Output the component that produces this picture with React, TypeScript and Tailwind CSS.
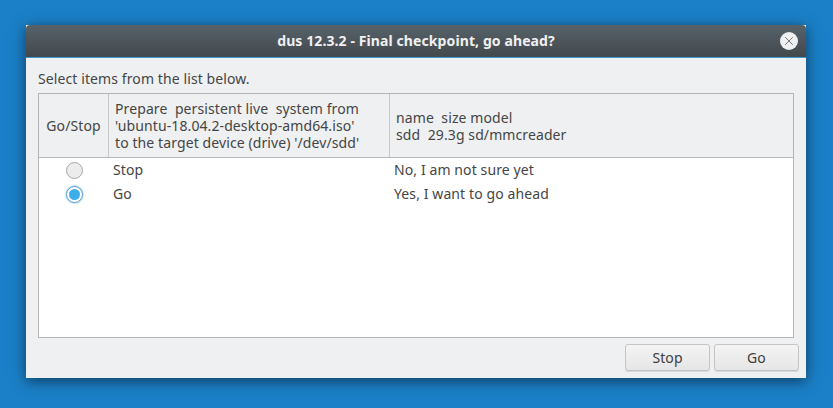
import { X } from "lucide-react";

function Radio({ checked }: { checked?: boolean }) {
  if (checked) {
    return (
      <span className="flex h-[17px] w-[17px] items-center justify-center rounded-full border border-[#5a9fd0] bg-white shadow-[0_0_0_1px_#c4e3f8]">
        <span className="h-[11px] w-[11px] rounded-full bg-[#3daee9]" />
      </span>
    );
  }
  return <span className="h-[17px] w-[17px] rounded-full border border-[#a8a8a8] bg-[#ececec]" />;
}

function Row({ label, desc, checked }: { label: string; desc: string; checked?: boolean }) {
  return (
    <div className="flex h-6 items-center">
      <div className="flex w-[70px] justify-center">
        <Radio checked={checked} />
      </div>
      <div className="w-[281px] pb-[2px] pl-[4px]">{label}</div>
      <div className="pb-[2px] pl-[4px]">{desc}</div>
    </div>
  );
}

function DialogButton({ label }: { label: string }) {
  return (
    <button className="h-[27px] w-[85px] rounded-[3px] border border-[#c4c4c4] bg-gradient-to-b from-[#f4f4f4] to-[#e6e6e6] text-[#3d3d3d] shadow-[0_1px_0_#d8d8d8]">
      {label}
    </button>
  );
}

export default function App() {
  return (
    <div className="flex h-[408px] w-[833px] items-start bg-[#1b80c8] pl-[26px] pt-[25px] font-['Noto_Sans','Open_Sans',sans-serif] text-[14px] tracking-[0.1px] text-[#454545]">
      <div className="flex h-[353px] w-[780px] flex-col bg-[#eff0f1] shadow-[0_3px_14px_rgba(0,0,0,0.55)]">
        <div className="relative flex h-[33px] items-center justify-center rounded-t-[4px] border-b border-[#3d9ad6] bg-gradient-to-b from-[#56626a] to-[#43494d] pb-[2px] font-bold text-[#f0f0f0]">
          dus 12.3.2 - Final checkpoint, go ahead?
          <span className="absolute right-[8px] top-[7px] flex h-[18px] w-[18px] items-center justify-center rounded-full bg-[#eef0f2]">
            <X size={14} strokeWidth={1.2} className="text-[#444]" />
          </span>
        </div>

        <div className="flex flex-1 flex-col pl-3 pr-[7px]">
          <div className="flex h-[35px] items-end pb-[4px] leading-5">Select items from the list below.</div>

          <div className="mr-[5px] flex h-[245px] flex-col border border-[#b4b4b4] bg-white">
            <div className="flex h-[64px] border-b border-[#b9b9b9] bg-[#eff0f1] leading-[17px]">
              <div className="flex w-[70px] items-center justify-center border-r border-[#c8c8c8]">Go/Stop</div>
              <div className="flex w-[281px] flex-col justify-center whitespace-pre border-r border-[#c8c8c8] pl-[6px]">
                <span>Prepare  persistent live  system from</span>
                <span>'ubuntu-18.04.2-desktop-amd64.iso'</span>
                <span>to the target device (drive) '/dev/sdd'</span>
              </div>
              <div className="flex flex-col justify-center whitespace-pre pl-[6px]">
                <span>name  size model</span>
                <span>sdd  29.3g sd/mmcreader</span>
              </div>
            </div>
            <Row label="Stop" desc="No, I am not sure yet" />
            <Row label="Go" desc="Yes, I want to go ahead" checked />
          </div>

          <div className="flex justify-end gap-1 pt-[6px]">
            <DialogButton label="Stop" />
            <DialogButton label="Go" />
          </div>
        </div>
      </div>
    </div>
  );
}
